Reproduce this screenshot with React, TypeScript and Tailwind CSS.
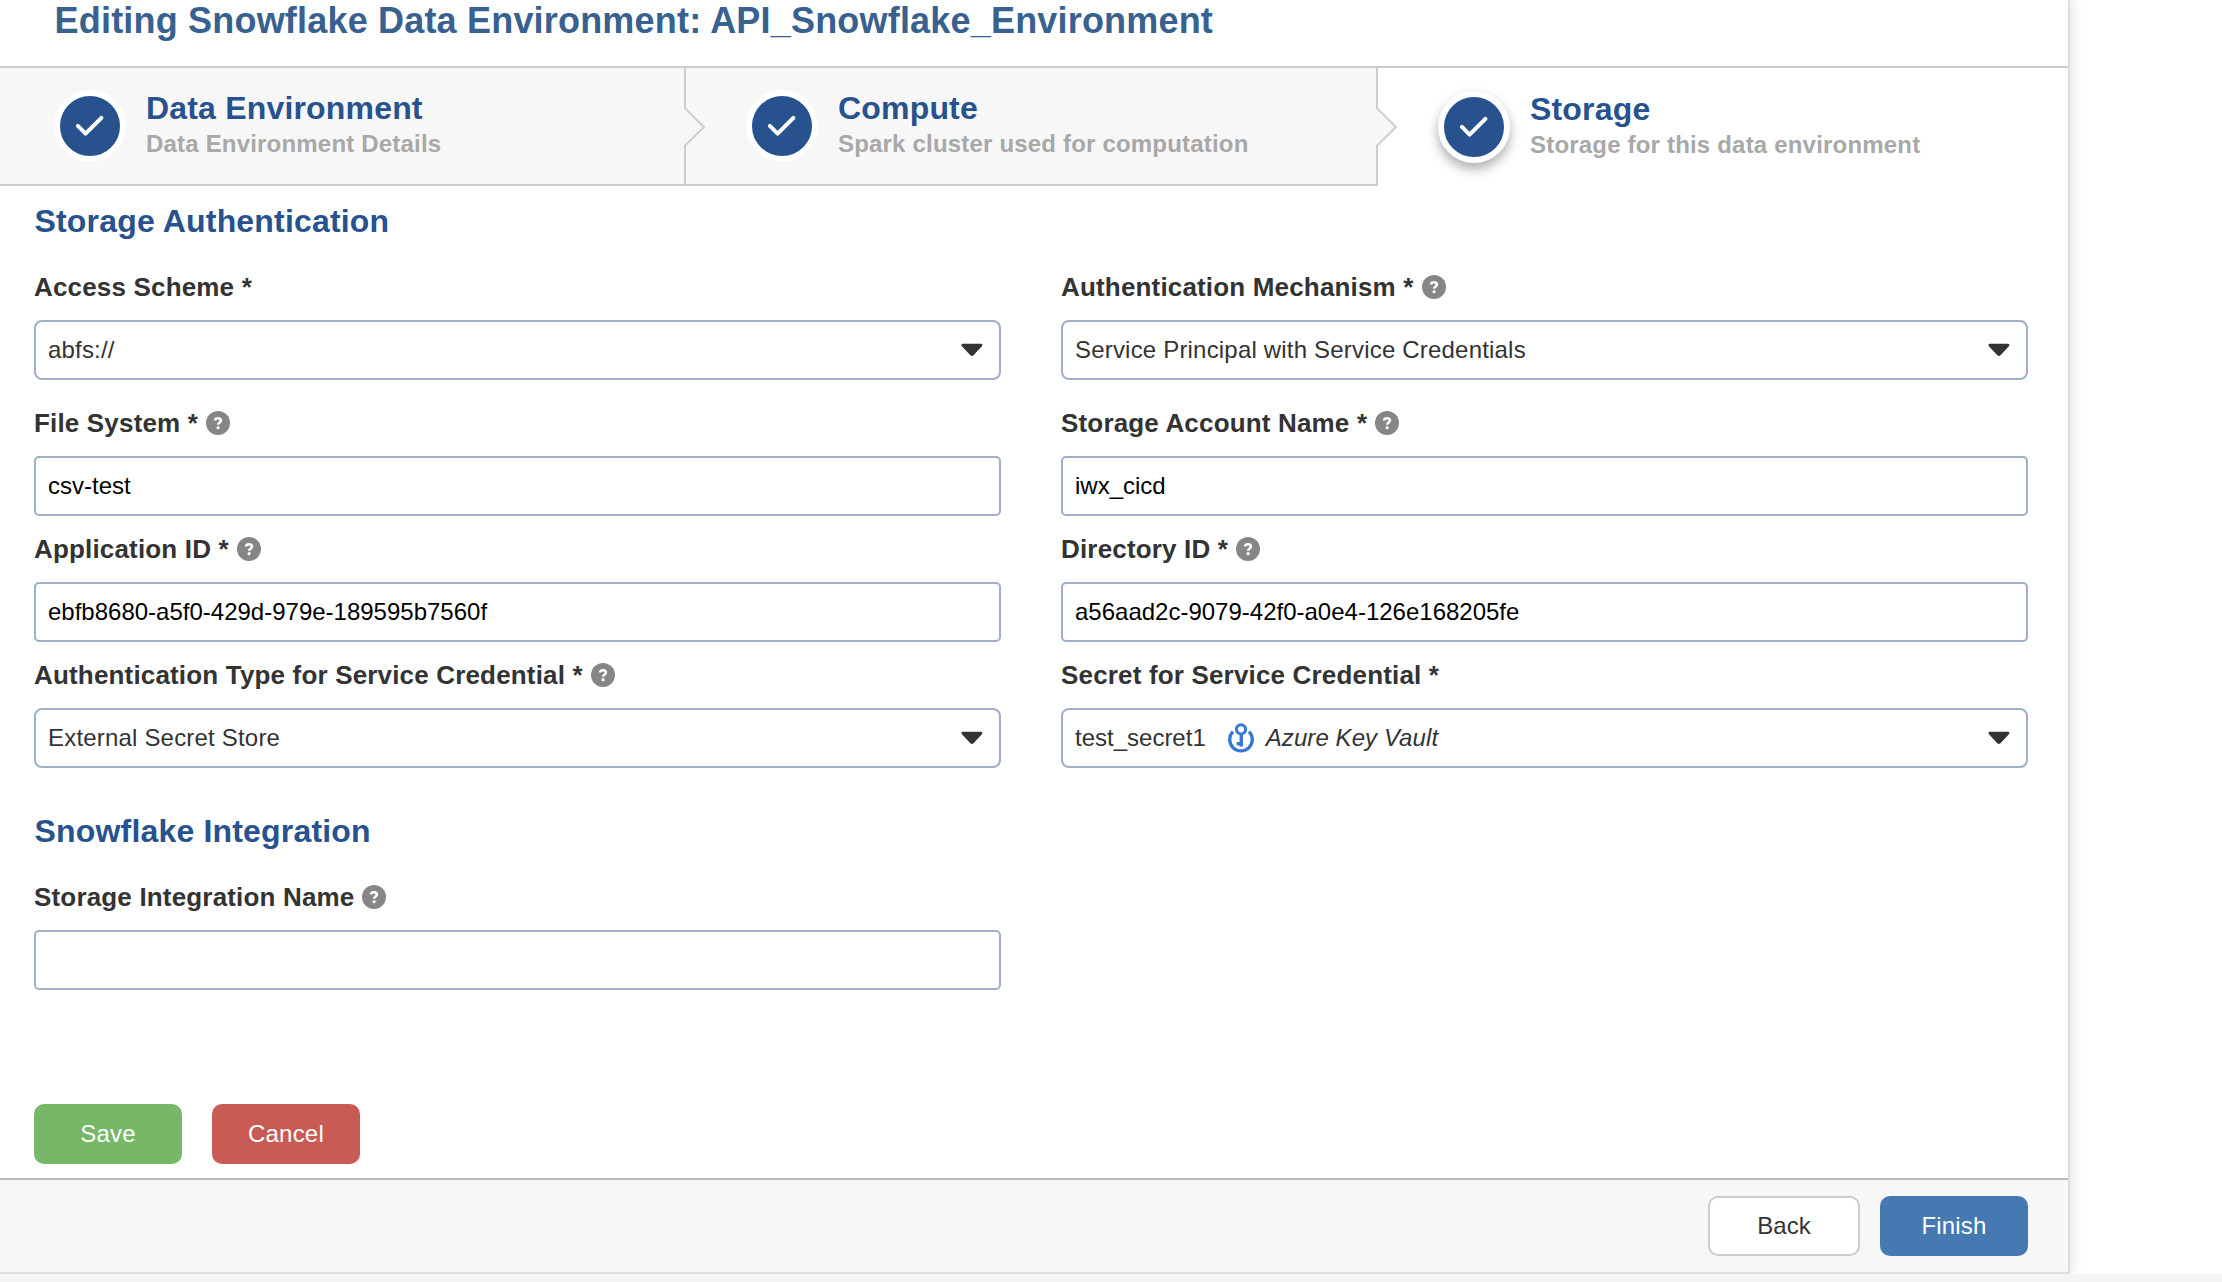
import React from "react";

function HelpIcon() {
  return (
    <svg className="h-6 w-6 shrink-0" viewBox="0 0 24 24" fill="none" aria-hidden="true">
      <circle cx="12" cy="12" r="12" fill="#868686" />
      <path
        d="M9.1 9.5C9.2 8 10.3 7.3 12 7.3c1.8 0 2.9.8 2.9 2.2 0 1.9-2.8 2-2.8 4.3"
        stroke="#fff"
        strokeWidth="2.6"
      />
      <circle cx="12.1" cy="16.7" r="1.6" fill="#fff" />
    </svg>
  );
}

function Caret() {
  return (
    <svg className="h-[14px] w-[22px] shrink-0" viewBox="0 0 22 14" aria-hidden="true">
      <path
        d="M1.9 0.8h18c1.5 0 2 1.4 1 2.4l-8.4 9c-1 1-2.2 1-3.2 0L.9 3.2C0 2.2.4.8 1.9.8z"
        fill="#333"
      />
    </svg>
  );
}

function KeyVaultIcon() {
  return (
    <svg className="h-[30px] w-[26px] shrink-0" viewBox="0 0 26 30" fill="none" stroke="#3379d6" aria-hidden="true">
      <path d="M5 8.6a11.3 11.3 0 1 0 16 0" strokeWidth="3.3" />
      <circle cx="13" cy="6.3" r="4.6" strokeWidth="3" />
      <path d="M13.3 10.8V23.6M13.3 20.8H8.8" strokeWidth="3.4" />
    </svg>
  );
}

type StepProps = { title: string; text: string; active?: boolean; first?: boolean };

function Step({ title, text, active, first }: StepProps) {
  return (
    <li
      className={
        "relative flex h-[118px] shrink-0 items-center gap-5 " +
        (first ? "w-[686px] pl-[54px] " : active ? "w-[690px] pl-[60px] " : "w-[692px] pl-[60px] ") +
        (active ? "bg-white" : "border-r-2 border-b-2 border-[#ccc] bg-[#f7f7f7]")
      }
    >
      <span
        className={
          "flex h-[72px] w-[72px] shrink-0 items-center justify-center rounded-full border-6 border-white bg-[#27528e] " +
          (active ? "shadow-[0_6px_12px_rgba(0,0,0,0.32)]" : "")
        }
      >
        <svg className="h-[60px] w-[60px]" viewBox="0 0 60 60" fill="none" aria-hidden="true">
          <path
            d="M17.9 29.9 25.6 37.6 41.4 21.8"
            stroke="#fff"
            strokeWidth="4"
            strokeLinecap="round"
            strokeLinejoin="round"
          />
        </svg>
      </span>
      <span className="block">
        <span className="block text-[32px] leading-9 font-bold tracking-[0.18px] text-[#27528e]">{title}</span>
        <span className="block text-2xl leading-9 font-bold tracking-[0.19px] text-[#a8a8a8]">{text}</span>
      </span>
      {!active && (
        <svg
          className="absolute top-[38px] -right-[22px] z-10 h-[42px] w-[22px]"
          viewBox="0 0 22 42"
          aria-hidden="true"
        >
          <path d="M-2 0.8H0L20.2 21 0 41.2H-2z" fill="#f7f7f7" />
          <path d="M-1 0.3 20 21-1 41.7" fill="none" stroke="#ccc" strokeWidth="1.9" />
        </svg>
      )}
    </li>
  );
}

type FieldProps = {
  label: string;
  help?: boolean;
  select?: boolean;
  children?: React.ReactNode;
};

function Field({ label, help, select, children }: FieldProps) {
  return (
    <div>
      <div className="mb-[17px] flex h-8 items-center gap-2 text-[26px] leading-8 font-bold tracking-[0.17px] text-[#333]">
        <span>{label}</span>
        {help && <HelpIcon />}
      </div>
      {select ? (
        <div className="flex h-[60px] items-center justify-between rounded-lg border-2 border-[#a0aec6] bg-white pr-4 pl-3 text-2xl tracking-[0.19px] text-[#333]">
          <span className="flex items-center">{children}</span>
          <Caret />
        </div>
      ) : (
        <div className="flex h-[60px] items-center rounded-[5px] border-2 border-[#a0aec6] bg-white px-3 text-2xl text-black">
          {children}
        </div>
      )}
    </div>
  );
}

export default function App() {
  return (
    <div className="flex h-[1282px] w-[2222px] flex-col overflow-hidden bg-[#f4f4f4] font-['Liberation_Sans',Arial,sans-serif]">
      <div className="h-[1274px] overflow-hidden bg-white">
        <main className="flex h-[1274px] w-[2070px] flex-col border-r-2 border-b-2 border-[#ddd] bg-white shadow-[0_0_14px_rgba(0,0,0,0.15)]">
          <h1 className="h-[66px] pl-[54.6px] text-4xl leading-[41px] font-bold tracking-[0.19px] whitespace-nowrap text-[#38618f]">
            Editing Snowflake Data Environment: API_Snowflake_Environment
          </h1>
          <ol className="flex h-[120px] border-t-2 border-[#ccc]">
            <Step first title="Data Environment" text="Data Environment Details" />
            <Step title="Compute" text="Spark cluster used for computation" />
            <Step active title="Storage" text="Storage for this data environment" />
          </ol>

          <form className="px-[34px] pt-[15px]">
            <div className="w-[1994px]">
              <h2 className="mb-[30px] pl-[0.5px] text-[32px] leading-10 font-bold tracking-[0.18px] text-[#27528e]">
                Storage Authentication
              </h2>
              <div className="grid grid-cols-2 gap-x-[60px]">
                <Field label="Access Scheme *" select>
                  abfs://
                </Field>
                <Field label="Authentication Mechanism *" help select>
                  Service Principal with Service Credentials
                </Field>
              </div>
              <div className="mt-[27px] grid grid-cols-2 gap-x-[60px] gap-y-[17px]">
                <Field label="File System *" help>
                  csv-test
                </Field>
                <Field label="Storage Account Name *" help>
                  iwx_cicd
                </Field>
                <Field label="Application ID *" help>
                  ebfb8680-a5f0-429d-979e-189595b7560f
                </Field>
                <Field label="Directory ID *" help>
                  a56aad2c-9079-42f0-a0e4-126e168205fe
                </Field>
                <Field label="Authentication Type for Service Credential *" help select>
                  External Secret Store
                </Field>
                <Field label="Secret for Service Credential *" select>
                  <span className="mr-[22px] tracking-normal">test_secret1</span>
                  <KeyVaultIcon />
                  <em className="ml-3 tracking-[0.08px]">Azure Key Vault</em>
                </Field>
              </div>
              <h2 className="mt-[43px] mb-[30px] pl-[0.5px] text-[32px] leading-10 font-bold tracking-[0.18px] text-[#27528e]">
                Snowflake Integration
              </h2>
              <div className="grid grid-cols-2 gap-x-[60px]">
                <Field label="Storage Integration Name" help />
              </div>
            </div>
            <div className="mt-[114px] flex gap-[30px] text-2xl tracking-[0.2px] text-white">
              <button type="button" className="h-[60px] w-[148px] rounded-[10px] bg-[#76b768]">
                Save
              </button>
              <button type="button" className="h-[60px] w-[148px] rounded-[10px] bg-[#c85b54]">
                Cancel
              </button>
            </div>
          </form>

          <footer className="mt-auto flex h-[94px] items-start justify-end gap-5 border-t-2 border-[#b8b8b8] bg-[#f7f7f7] pt-4 pr-10 text-2xl">
            <button type="button" className="h-[60px] w-[152px] rounded-[10px] border-2 border-[#ccc] bg-white text-[#333]">
              Back
            </button>
            <button type="button" className="h-[60px] w-[148px] rounded-[10px] bg-[#4679b2] tracking-[0.15px] text-white">
              Finish
            </button>
          </footer>
        </main>
      </div>
    </div>
  );
}
